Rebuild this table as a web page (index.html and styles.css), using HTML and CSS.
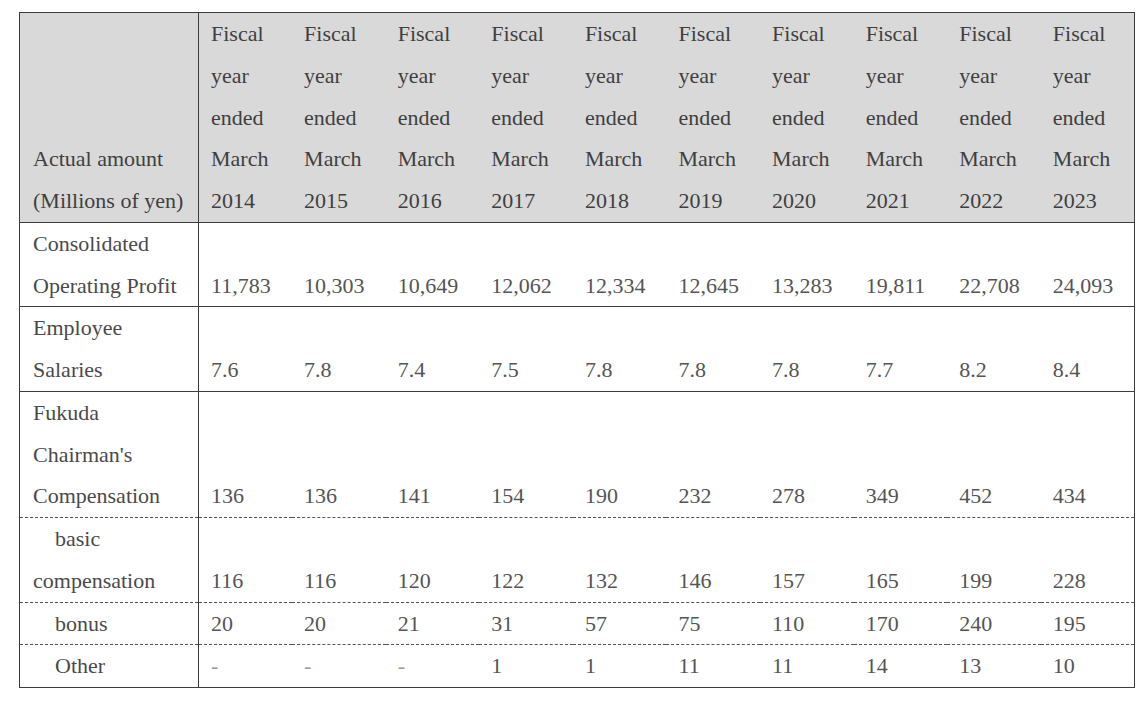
FILE: index.html
```html
<!DOCTYPE html>
<html lang="en">
<head>
<meta charset="utf-8">
<title>Compensation table</title>
<link rel="stylesheet" href="styles.css">
</head>
<body>
<div class="page">
<table class="comp">
  <colgroup>
    <col class="c-label">
    <col class="c-year"><col class="c-year"><col class="c-year"><col class="c-year"><col class="c-year">
    <col class="c-year"><col class="c-year"><col class="c-year"><col class="c-year"><col class="c-year">
  </colgroup>
  <thead>
    <tr>
      <th class="label">Actual amount<br>(Millions of yen)</th>
      <th>Fiscal<br>year<br>ended<br>March<br>2014</th>
      <th>Fiscal<br>year<br>ended<br>March<br>2015</th>
      <th>Fiscal<br>year<br>ended<br>March<br>2016</th>
      <th>Fiscal<br>year<br>ended<br>March<br>2017</th>
      <th>Fiscal<br>year<br>ended<br>March<br>2018</th>
      <th>Fiscal<br>year<br>ended<br>March<br>2019</th>
      <th>Fiscal<br>year<br>ended<br>March<br>2020</th>
      <th>Fiscal<br>year<br>ended<br>March<br>2021</th>
      <th>Fiscal<br>year<br>ended<br>March<br>2022</th>
      <th>Fiscal<br>year<br>ended<br>March<br>2023</th>
    </tr>
  </thead>
  <tbody>
    <tr>
      <td class="label">Consolidated<br>Operating Profit</td>
      <td>11,783</td><td>10,303</td><td>10,649</td><td>12,062</td><td>12,334</td>
      <td>12,645</td><td>13,283</td><td>19,811</td><td>22,708</td><td>24,093</td>
    </tr>
    <tr>
      <td class="label">Employee<br>Salaries</td>
      <td>7.6</td><td>7.8</td><td>7.4</td><td>7.5</td><td>7.8</td>
      <td>7.8</td><td>7.8</td><td>7.7</td><td>8.2</td><td>8.4</td>
    </tr>
    <tr class="dash">
      <td class="label">Fukuda<br>Chairman's<br>Compensation</td>
      <td>136</td><td>136</td><td>141</td><td>154</td><td>190</td>
      <td>232</td><td>278</td><td>349</td><td>452</td><td>434</td>
    </tr>
    <tr class="dash">
      <td class="label sub">basic<br>compensation</td>
      <td>116</td><td>116</td><td>120</td><td>122</td><td>132</td>
      <td>146</td><td>157</td><td>165</td><td>199</td><td>228</td>
    </tr>
    <tr class="dash">
      <td class="label sub">bonus</td>
      <td>20</td><td>20</td><td>21</td><td>31</td><td>57</td>
      <td>75</td><td>110</td><td>170</td><td>240</td><td>195</td>
    </tr>
    <tr>
      <td class="label sub">Other</td>
      <td class="nil">-</td><td class="nil">-</td><td class="nil">-</td><td>1</td><td>1</td>
      <td>11</td><td>11</td><td>14</td><td>13</td><td>10</td>
    </tr>
  </tbody>
</table>
</div>
</body>
</html>
```

FILE: styles.css
```css
html, body {
  margin: 0;
  padding: 0;
  background: #ffffff;
}

.page {
  padding: 12px 0 0 19px;
}

.comp {
  border-collapse: collapse;
  table-layout: fixed;
  width: 1115px;
  font-family: "Liberation Serif", "Times New Roman", serif;
  font-size: 22px;
  line-height: 41.75px;
  color: #4a4a4a;
  border: 1px solid #3c3c3c;
}

.c-label {
  width: 179px;
}

.c-year {
  width: 93.6px;
}

.comp th,
.comp td {
  padding: 0 0 0 12px;
  text-align: left;
  vertical-align: bottom;
  font-weight: normal;
  white-space: nowrap;
}

.comp thead th {
  background: #d9d9d9;
  color: #3f3f3f;
}

.comp tr {
  border-bottom: 1px solid #3c3c3c;
}

.comp tr.dash {
  border-bottom: 1px dashed #555555;
}

.comp .label {
  padding-left: 13px;
  border-right: 1px solid #3c3c3c;
  color: #4a4a4a;
}

.comp thead .label {
  color: #3f3f3f;
}

.comp .sub {
  text-indent: 22px;
}

.comp td {
  color: #555555;
}

.comp td.label {
  color: #4a4a4a;
}

.comp td.nil {
  color: #9a9a9a;
}
```
